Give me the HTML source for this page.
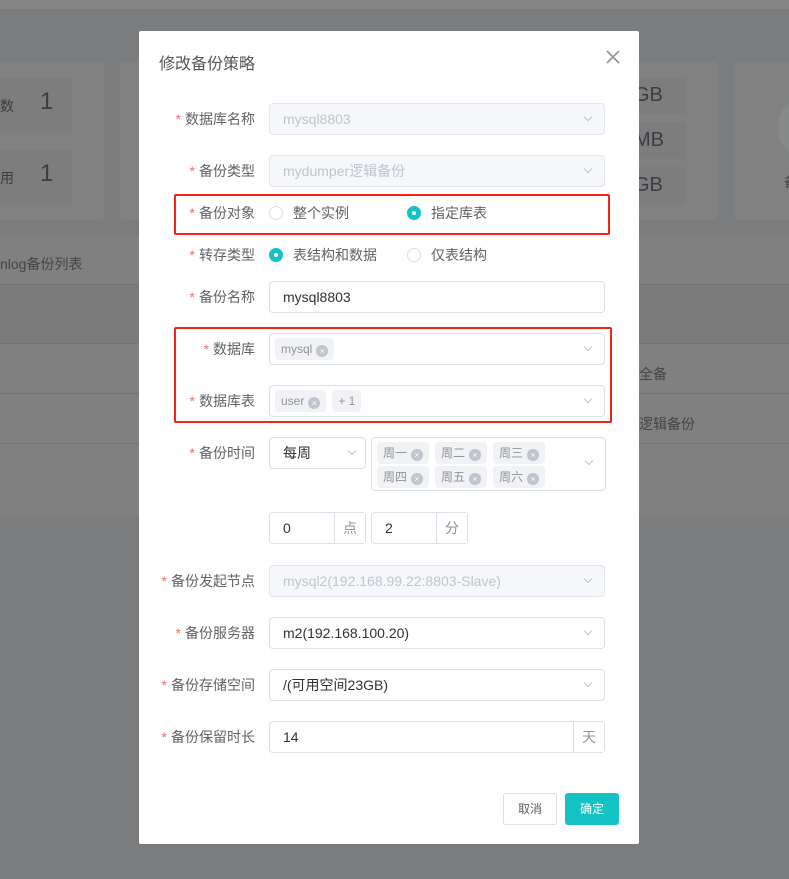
<!DOCTYPE html>
<html><head><meta charset="utf-8"><style>
*{box-sizing:border-box;margin:0;padding:0}
body{width:789px;height:879px;overflow:hidden;background:#7b7c7e;font-family:"Liberation Sans","Noto Sans CJK SC",sans-serif;font-size:14px;color:#606266;position:relative}
.a{position:absolute}
.card{position:absolute;background:#818181;border-radius:4px}
.bgt{color:#3a3d42;position:absolute}
.dlg{position:absolute;left:139px;top:31px;width:500px;height:813px;background:#fff;border-radius:2px}
.lbl{position:absolute;right:384px;text-align:right;color:#606266;font-size:14px;line-height:32px;white-space:nowrap}
.lbl:before{content:"*";color:#f56c6c;margin-right:4px}
.in{position:absolute;left:130px;width:336px;height:32px;border:1px solid #dcdfe6;border-radius:4px;line-height:30px;padding-left:13px;color:#606266;background:#fff}
.dis{background:#f5f7fa;border-color:#e4e7ed;color:#c0c4cc}
.arr{position:absolute;right:13px;top:10px;width:6px;height:6px;border-right:1px solid #c0c4cc;border-bottom:1px solid #c0c4cc;transform:rotate(45deg)}
.tag{display:inline-block;height:22px;line-height:22px;background:#f0f2f5;color:#909399;font-size:12px;padding:0 6px;border-radius:4px;margin-right:6px;vertical-align:top}
.x{display:inline-block;width:12px;height:12px;border-radius:50%;background:#c0c4cc;color:#fff;font-size:9px;line-height:12px;text-align:center;margin-left:4px;vertical-align:-1px}
.rd{position:absolute;width:14px;height:14px;border-radius:50%;border:1px solid #dcdfe6}
.rd.on{border-color:#13c2c2;background:#13c2c2}
.rd.on:after{content:"";position:absolute;left:4px;top:4px;width:4px;height:4px;border-radius:50%;background:#fff}
.rt{position:absolute;line-height:16px;color:#606266}
.red{position:absolute;border:2px solid #f5221b;border-radius:2px}
.sfx{position:absolute;top:0;right:0;height:30px;border-left:1px solid #dcdfe6;background:#fff;color:#909399;text-align:center;line-height:30px}
</style></head><body>
<div class="a" style="left:0;top:0;width:789px;height:9px;background:#858585"></div>
<div class="card" style="left:-10px;top:62px;width:114px;height:158px"></div>
<div class="a" style="left:0;top:78px;width:72px;height:55px;background:#7d7d7d"></div>
<div class="a" style="left:0;top:150px;width:72px;height:55px;background:#7d7d7d"></div>
<div class="bgt" style="left:0;top:96px;font-size:14px">数</div>
<div class="bgt" style="left:40px;top:88px;font-size:24px">1</div>
<div class="bgt" style="left:0;top:168px;font-size:14px">用</div>
<div class="bgt" style="left:40px;top:160px;font-size:24px">1</div>
<div class="card" style="left:120px;top:62px;width:598px;height:158px"></div>
<div class="a" style="left:639px;top:78px;width:47px;height:36px;background:#7d7d7d"></div>
<div class="a" style="left:639px;top:122px;width:47px;height:37px;background:#7d7d7d"></div>
<div class="a" style="left:639px;top:167px;width:47px;height:37px;background:#7d7d7d"></div>
<div class="bgt" style="left:634px;top:84px;font-size:20px">GB</div>
<div class="bgt" style="left:634px;top:129px;font-size:20px">MB</div>
<div class="bgt" style="left:634px;top:174px;font-size:20px">GB</div>
<div class="card" style="left:734px;top:62px;width:70px;height:158px"></div>
<div class="a" style="left:778px;top:100px;width:40px;height:55px;border-radius:50%;background:#858a88"></div>
<div class="bgt" style="left:784px;top:172px;font-size:14px;color:#444">备</div>
<div class="a" style="left:0;top:236px;width:789px;height:281px;background:#808080"></div>
<div class="a" style="left:0;top:284px;width:789px;height:1px;background:#737373"></div>
<div class="a" style="left:0;top:285px;width:789px;height:58px;background:#7b7b7b"></div>
<div class="a" style="left:0;top:343px;width:789px;height:1px;background:#737373"></div>
<div class="a" style="left:0;top:393px;width:789px;height:1px;background:#737373"></div>
<div class="a" style="left:0;top:443px;width:789px;height:1px;background:#737373"></div>
<div class="bgt" style="left:0;top:254px;color:#444">nlog备份列表</div>
<div class="bgt" style="left:639px;top:364px;color:#444">全备</div>
<div class="bgt" style="left:639px;top:414px;color:#444">逻辑备份</div>

<div class="dlg">
<div class="a" style="left:20px;top:19px;font-size:16px;color:#555">修改备份策略</div>
<div class="a" style="left:466px;top:18px;width:16px;height:16px">
<svg width="16" height="16"><path d="M2 2L14 14M14 2L2 14" stroke="#909399" stroke-width="1.6"/></svg></div>

<div class="lbl" style="top:72px">数据库名称</div>
<div class="in dis" style="top:72px">mysql8803<i class="arr"></i></div>
<div class="lbl" style="top:124px">备份类型</div>
<div class="in dis" style="top:124px">mydumper逻辑备份<i class="arr"></i></div>

<div class="red" style="left:35px;top:163px;width:436px;height:41px"></div>
<div class="lbl" style="top:166px">备份对象</div>
<div class="rd" style="left:130px;top:175px"></div><div class="rt" style="left:154px;top:174px">整个实例</div>
<div class="rd on" style="left:268px;top:175px"></div><div class="rt" style="left:292px;top:174px">指定库表</div>

<div class="lbl" style="top:208px">转存类型</div>
<div class="rd on" style="left:130px;top:217px"></div><div class="rt" style="left:154px;top:216px">表结构和数据</div>
<div class="rd" style="left:268px;top:217px"></div><div class="rt" style="left:292px;top:216px">仅表结构</div>

<div class="lbl" style="top:250px">备份名称</div>
<div class="in" style="top:250px;color:#303133">mysql8803</div>

<div class="red" style="left:35px;top:296px;width:438px;height:96px"></div>
<div class="lbl" style="top:302px">数据库</div>
<div class="in" style="top:302px;padding-left:5px;padding-top:4px;line-height:22px"><span class="tag">mysql<span class="x">×</span></span><i class="arr"></i></div>
<div class="lbl" style="top:354px">数据库表</div>
<div class="in" style="top:354px;padding-left:5px;padding-top:4px;line-height:22px"><span class="tag">user<span class="x">×</span></span><span class="tag">+ 1</span><i class="arr"></i></div>

<div class="lbl" style="top:406px">备份时间</div>
<div class="in" style="top:406px;width:97px;color:#303133">每周<i class="arr" style="right:10px"></i></div>
<div class="in" style="left:232px;top:406px;width:235px;height:54px;padding-left:5px;padding-top:4px;line-height:22px">
<div style="height:24px"><span class="tag">周一<span class="x">×</span></span><span class="tag">周二<span class="x">×</span></span><span class="tag">周三<span class="x">×</span></span></div>
<div><span class="tag">周四<span class="x">×</span></span><span class="tag">周五<span class="x">×</span></span><span class="tag">周六<span class="x">×</span></span></div>
<i class="arr" style="top:20px"></i></div>

<div class="in" style="top:481px;width:97px;color:#303133">0<span class="sfx" style="width:31px">点</span></div>
<div class="in" style="left:232px;top:481px;width:97px;color:#303133">2<span class="sfx" style="width:31px">分</span></div>

<div class="lbl" style="top:534px">备份发起节点</div>
<div class="in dis" style="top:534px">mysql2(192.168.99.22:8803-Slave)<i class="arr"></i></div>
<div class="lbl" style="top:586px">备份服务器</div>
<div class="in" style="top:586px;color:#303133">m2(192.168.100.20)<i class="arr"></i></div>
<div class="lbl" style="top:638px">备份存储空间</div>
<div class="in" style="top:638px;color:#303133">/(可用空间23GB)<i class="arr"></i></div>
<div class="lbl" style="top:690px">备份保留时长</div>
<div class="in" style="top:690px;color:#303133">14<span class="sfx" style="width:31px">天</span></div>

<div class="a" style="left:364px;top:762px;width:54px;height:32px;border:1px solid #dcdfe6;border-radius:3px;text-align:center;line-height:30px;font-size:12px;color:#606266">取消</div>
<div class="a" style="left:426px;top:762px;width:54px;height:32px;background:#13c2c2;border-radius:3px;text-align:center;line-height:32px;font-size:12px;color:#fff">确定</div>
</div>
</body></html>
